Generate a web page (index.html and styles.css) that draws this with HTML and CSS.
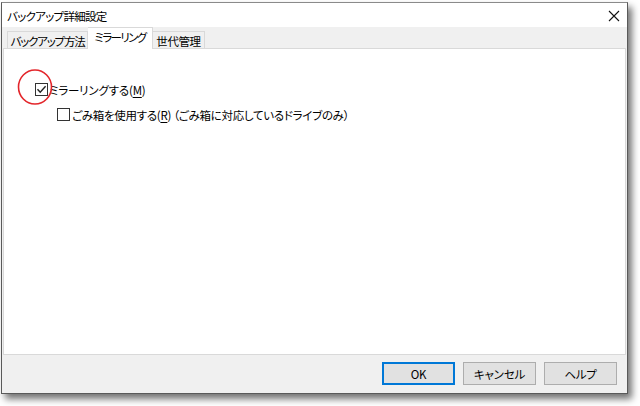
FILE: index.html
```html
<!DOCTYPE html>
<html lang="ja">
<head>
<meta charset="utf-8">
<title>バックアップ詳細設定</title>
<link rel="stylesheet" href="styles.css">
</head>
<body>
<div class="window">
  <div class="titlebar">
    <span class="title">バックアップ詳細設定</span>
    <svg class="close" width="12" height="12" viewBox="0 0 12 12"><path d="M1 1 L11 11 M11 1 L1 11" stroke="#111" stroke-width="1.1" fill="none"/></svg>
  </div>
  <div class="body">
    <div class="tabs">
      <div class="tab t1">バックアップ方法</div>
      <div class="tab active">ミラーリング</div>
      <div class="tab t3">世代管理</div>
    </div>
    <div class="panel">
      <div class="check c1">
        <span class="box"><svg width="11" height="11" viewBox="0 0 11 11"><path d="M1.5 5.3 L4.2 8.2 L9.6 2.2" stroke="#222" stroke-width="1.4" fill="none"/></svg></span>
        <span class="label">ミラーリングする(<u>M</u>)</span>
      </div>
      <div class="check c2">
        <span class="box"></span>
        <span class="label">ごみ箱を使用する(<u>R</u>) （ごみ箱に対応しているドライブのみ）</span>
      </div>
      <svg class="mark" width="40" height="40" viewBox="0 0 40 40"><ellipse cx="20" cy="20" rx="16.5" ry="17" stroke="#e3262b" stroke-width="1.6" fill="none"/></svg>
    </div>
    <div class="buttons">
      <div class="btn default">OK</div>
      <div class="btn">キャンセル</div>
      <div class="btn">ヘルプ</div>
    </div>
  </div>
</div>
</body>
</html>
```
FILE: styles.css
```css
html, body {
  margin: 0;
  padding: 0;
  background: #ffffff;
}
body {
  width: 640px;
  height: 406px;
  overflow: hidden;
  padding: 2px 0 0 1px;
  box-sizing: border-box;
  font-family: "Noto Sans CJK JP", "Noto Sans", sans-serif;
  font-feature-settings: "palt";
  font-size: 11.5px;
  letter-spacing: -0.2px;
  color: #000;
}
.window {
  width: 627px;
  height: 392px;
  box-sizing: border-box;
  border: 1px solid #5a5a5a;
  border-top-color: #8a8a8a;
  background: #f0f0f0;
  box-shadow: 4px 5px 7px rgba(0,0,0,0.55);
  display: flex;
  flex-direction: column;
}
.titlebar {
  height: 24px;
  flex: none;
  background: #ffffff;
  display: flex;
  align-items: center;
  justify-content: space-between;
  padding: 0 7px 0 5px;
}
.title {
  line-height: 16px;
  padding-top: 1px;
  white-space: nowrap;
  letter-spacing: -0.7px;
}
.close {
  display: block;
  margin-top: 2px;
}
.body {
  flex: 1;
  display: flex;
  flex-direction: column;
  padding: 0 1px;
}
.tabs {
  height: 21px;
  display: flex;
  align-items: flex-end;
  padding-left: 4px;
  position: relative;
  z-index: 1;
}
.tab {
  height: 17px;
  box-sizing: border-box;
  border: 1px solid #d9d9d9;
  border-bottom: none;
  background: #f0f0f0;
  display: flex;
  align-items: center;
  justify-content: center;
  line-height: 14px;
  padding-top: 1px;
  white-space: nowrap;
  letter-spacing: -1.2px;
}
.t1 { width: 81px; }
.t3 { width: 52px; border-left: none; letter-spacing: -0.4px; }
.tab.active {
  width: 65px;
  height: 22px;
  margin-bottom: -1px;
  background: #ffffff;
  padding-top: 0;
  padding-bottom: 3px;
  border-left: none;
  letter-spacing: -1.6px;
}
.panel {
  height: 307px;
  box-sizing: border-box;
  background: #ffffff;
  border: 1px solid #d9d9d9;
  position: relative;
  padding: 34px 0 0 31px;
  display: flex;
  flex-direction: column;
  gap: 12px;
}
.check {
  display: flex;
  align-items: center;
  height: 13px;
}
.c2 { margin-left: 22px; }
.box {
  width: 13px;
  height: 13px;
  box-sizing: border-box;
  border: 1px solid #333333;
  background: #fff;
  display: flex;
  align-items: center;
  justify-content: center;
  flex: none;
}
.box svg { display: block; }
.label {
  line-height: 14px;
  margin-left: 1px;
  white-space: nowrap;
}
.c2 .label { margin-left: 2px; letter-spacing: -0.3px; }
.label u { text-underline-offset: 2px; }
.mark {
  position: absolute;
  left: 11px;
  top: 18px;
}
.buttons {
  display: flex;
  justify-content: flex-end;
  gap: 8px;
  padding: 7px 9px 0 0;
}
.btn {
  width: 73px;
  height: 23px;
  box-sizing: border-box;
  background: #e1e1e1;
  border: 1px solid #adadad;
  display: flex;
  align-items: center;
  justify-content: center;
  line-height: 14px;
  white-space: nowrap;
}
.btn.default {
  border: 2px solid #0078d7;
}
```
